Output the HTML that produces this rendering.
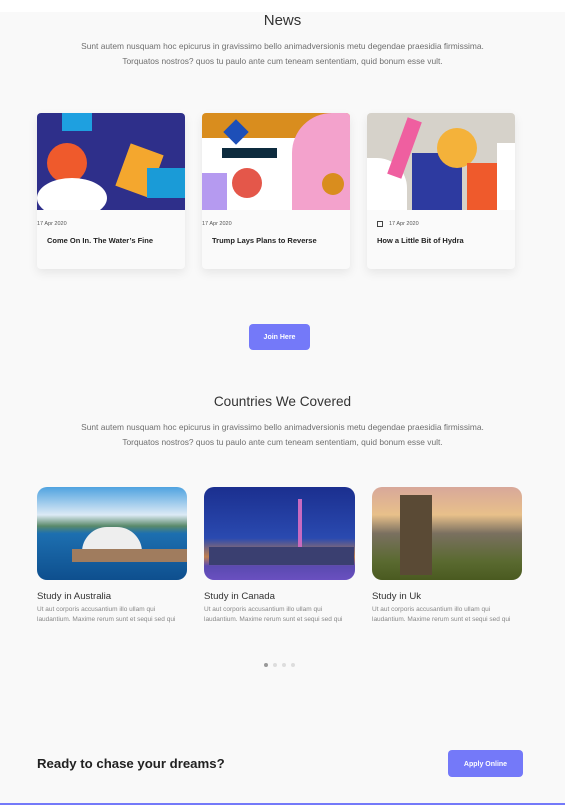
<!DOCTYPE html>
<html><head><meta charset="utf-8"><style>
*{margin:0;padding:0;box-sizing:border-box}
body{width:565px;height:805px;background:#f9f9f9;font-family:"Liberation Sans",sans-serif;position:relative;overflow:hidden;color:#222}
.abs{position:absolute}
.top{left:0;top:0;width:565px;height:12px;background:#fff}
h2{position:absolute;width:565px;text-align:center;font-weight:normal;color:#333}
.p{position:absolute;width:565px;text-align:center;font-size:8.4px;line-height:15px;color:#6f6f6f}
.card{position:absolute;top:113px;width:148px;height:156px;background:#fafafa;border-radius:4px;box-shadow:0 4px 10px rgba(0,0,0,.08);overflow:hidden}
.card .img{height:97px;position:relative;overflow:hidden}
.date{position:absolute;top:108px;font-size:5.5px;color:#555}
.ct{position:absolute;top:123px;left:10px;font-size:7.5px;font-weight:bold;color:#222}
.btn{position:absolute;background:#7479f9;color:#fff;font-size:7px;font-weight:bold;border-radius:4px;text-align:center}
.cimg{position:absolute;top:487px;height:93px;border-radius:10px;overflow:hidden}
.cn{position:absolute;top:591px;font-size:9.6px;color:#333}
.cd{position:absolute;top:605px;font-size:6.5px;line-height:10px;color:#888;width:160px;white-space:nowrap}
.dot{position:absolute;top:663px;width:4px;height:4px;border-radius:2px;background:#ddd}
</style></head><body>
<div class="abs top"></div>
<h2 style="top:12px;font-size:15px">News</h2>
<div class="p" style="top:39px">Sunt autem nusquam hoc epicurus in gravissimo bello animadversionis metu degendae praesidia firmissima.<br>Torquatos nostros? quos tu paulo ante cum teneam sententiam, quid bonum esse vult.</div>

<div class="card" style="left:37px"><div class="img" style="background:#2e2f8a">
<div class="abs" style="left:10px;top:30px;width:40px;height:40px;border-radius:50%;background:#ef5a2c"></div>
<div class="abs" style="left:85px;top:35px;width:35px;height:45px;background:#f4a72e;transform:rotate(20deg)"></div>
<div class="abs" style="left:0;top:65px;width:70px;height:40px;border-radius:50%;background:#fff"></div>
<div class="abs" style="left:110px;top:55px;width:40px;height:30px;background:#1a9bd7"></div>
<div class="abs" style="left:25px;top:0;width:30px;height:18px;background:#1ea0e0"></div>
</div><div class="date" style="left:0">17 Apr 2020</div><div class="ct">Come On In. The Water’s Fine</div></div>

<div class="card" style="left:202px"><div class="img" style="background:#fff">
<div class="abs" style="left:0;top:0;width:148px;height:25px;background:#d98d1e"></div>
<div class="abs" style="left:90px;top:0;width:60px;height:97px;border-radius:40px 0 0 0;background:#f3a2cc"></div>
<div class="abs" style="left:30px;top:55px;width:30px;height:30px;border-radius:50%;background:#e4574a"></div>
<div class="abs" style="left:0;top:60px;width:25px;height:37px;background:#b59af0"></div>
<div class="abs" style="left:120px;top:60px;width:22px;height:22px;border-radius:50%;background:#d98d1e"></div>
<div class="abs" style="left:25px;top:10px;width:18px;height:18px;background:#1d4fb8;transform:rotate(45deg)"></div>
<div class="abs" style="left:20px;top:35px;width:55px;height:10px;background:#0d2b3e"></div>
</div><div class="date" style="left:0">17 Apr 2020</div><div class="ct">Trump Lays Plans to Reverse</div></div>

<div class="card" style="left:367px"><div class="img" style="background:#d6d2ca">
<div class="abs" style="left:45px;top:40px;width:50px;height:57px;background:#2d3aa0"></div>
<div class="abs" style="left:70px;top:15px;width:40px;height:40px;border-radius:50%;background:#f4b23a"></div>
<div class="abs" style="left:0;top:45px;width:40px;height:52px;background:#fff;border-radius:0 30px 0 0"></div>
<div class="abs" style="left:30px;top:5px;width:15px;height:60px;background:#ef5fa0;transform:rotate(20deg)"></div>
<div class="abs" style="left:100px;top:50px;width:30px;height:47px;background:#ef5a2c"></div>
<div class="abs" style="left:130px;top:30px;width:18px;height:67px;background:#fff"></div>
</div><div class="date" style="left:22px">17 Apr 2020</div>
<div class="abs" style="left:10px;top:108px;width:6px;height:6px;border:1px solid #444"></div>
<div class="ct">How a Little Bit of Hydra</div></div>

<div class="btn" style="left:249px;top:324px;width:61px;height:26px;line-height:28px">Join Here</div>

<h2 style="top:394px;font-size:13.6px">Countries We Covered</h2>
<div class="p" style="top:420px">Sunt autem nusquam hoc epicurus in gravissimo bello animadversionis metu degendae praesidia firmissima.<br>Torquatos nostros? quos tu paulo ante cum teneam sententiam, quid bonum esse vult.</div>

<div class="cimg" style="left:37px;width:150px;background:linear-gradient(#4fa3e0 0%,#dceaf5 30%,#5a8a6a 42%,#1d6fb0 50%,#0e4f8e 100%)">
<div class="abs" style="left:45px;top:40px;width:60px;height:25px;background:#eee;border-radius:30px 30px 0 0"></div>
<div class="abs" style="left:35px;top:62px;width:115px;height:13px;background:#a07c5e"></div></div>
<div class="cimg" style="left:204px;width:151px;background:linear-gradient(#1b2f8f 0%,#2a4ab0 55%,#c08050 75%,#5a4ab0 85%,#6a50c0 100%)">
<div class="abs" style="left:94px;top:12px;width:4px;height:65px;background:#c86ac0"></div>
<div class="abs" style="left:5px;top:60px;width:145px;height:18px;background:#3a3f70"></div></div>
<div class="cimg" style="left:372px;width:150px;background:linear-gradient(#d8a89a 0%,#e8c08a 30%,#7a7060 50%,#5a6a30 80%,#4a5a20 100%)">
<div class="abs" style="left:28px;top:8px;width:32px;height:80px;background:#5a4a35"></div></div>

<div class="cn" style="left:37px">Study in Australia</div><div class="cd" style="left:37px">Ut aut corporis accusantium illo ullam qui<br>laudantium. Maxime rerum sunt et sequi sed qui</div>
<div class="cn" style="left:204px">Study in Canada</div><div class="cd" style="left:204px">Ut aut corporis accusantium illo ullam qui<br>laudantium. Maxime rerum sunt et sequi sed qui</div>
<div class="cn" style="left:372px">Study in Uk</div><div class="cd" style="left:372px">Ut aut corporis accusantium illo ullam qui<br>laudantium. Maxime rerum sunt et sequi sed qui</div>

<div class="dot" style="left:264px;background:#999"></div><div class="dot" style="left:273px"></div><div class="dot" style="left:282px"></div><div class="dot" style="left:291px"></div>

<div class="abs" style="left:37px;top:756px;font-size:13.2px;font-weight:bold;color:#222">Ready to chase your dreams?</div>
<div class="btn" style="left:448px;top:750px;width:75px;height:27px;line-height:30px">Apply Online</div>
<div class="abs" style="left:0;top:803px;width:565px;height:2px;background:#7479f9"></div>
</body></html>
